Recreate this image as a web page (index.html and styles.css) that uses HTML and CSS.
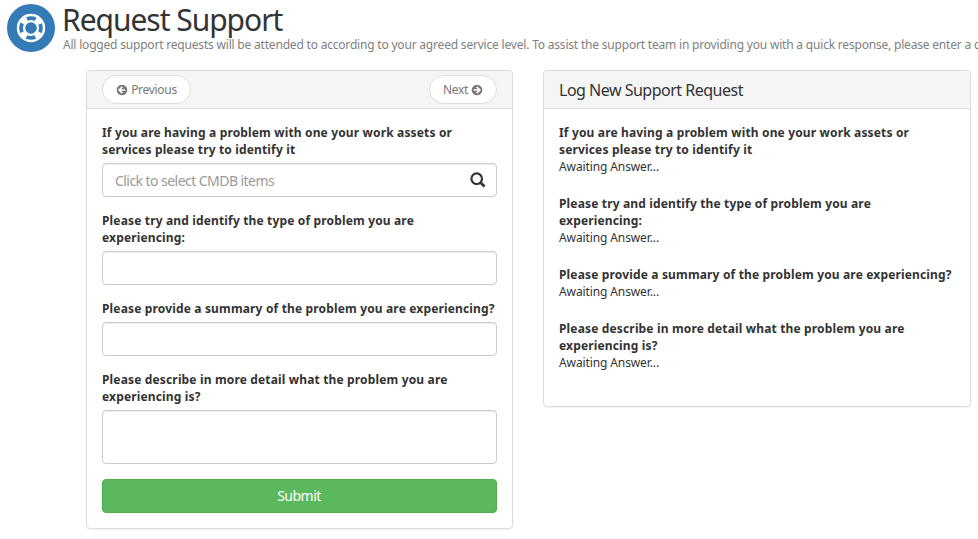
FILE: index.html
```
<!DOCTYPE html>
<html lang="en">
<head>
<meta charset="utf-8">
<title>Request Support</title>
<link rel="stylesheet" href="styles.css">
</head>
<body>
<header class="page-header">
  <svg class="logo" viewBox="0 0 48 48" aria-hidden="true">
    <circle cx="24" cy="24" r="24" fill="#337ab7"/>
    <circle cx="24" cy="24" r="10" fill="none" stroke="#fff" stroke-width="8.4"/>
    <circle cx="24" cy="24" r="9.9" fill="none" stroke="#337ab7" stroke-width="3.8" stroke-dasharray="9 6.551" stroke-dashoffset="4.5"/>
  </svg>
  <div class="heading">
    <h1>Request Support</h1>
    <p class="intro">All logged support requests will be attended to according to your agreed service level. To assist the support team in providing you with a quick response, please enter a c</p>
  </div>
</header>
<main class="columns">
  <section class="panel">
    <div class="panel-heading">
      <button class="pill previous" type="button">
        <svg class="arrow" viewBox="0 0 12 12" aria-hidden="true"><circle cx="6" cy="6" r="5.3"/><path d="M9.3 6H3.6M6.3 2.9L3.2 6l3.1 3.1"/></svg>
        <span>Previous</span>
      </button>
      <button class="pill next" type="button">
        <span>Next</span>
        <svg class="arrow" viewBox="0 0 12 12" aria-hidden="true"><circle cx="6" cy="6" r="5.3"/><path d="M2.7 6h5.7M5.7 2.9L8.8 6 5.7 9.1"/></svg>
      </button>
    </div>
    <form class="panel-body">
      <div class="group">
        <div class="label">If you are having a problem with one your work assets or<br>services please try to identify it</div>
        <div class="control lookup">
          <span>Click to select CMDB items</span>
          <svg class="search" viewBox="0 0 16 16" aria-hidden="true"><circle cx="6.7" cy="6.7" r="5.3"/><path d="M10.7 10.7l3.8 3.8"/></svg>
        </div>
      </div>
      <div class="group">
        <div class="label">Please try and identify the type of problem you are<br>experiencing:</div>
        <div class="control"></div>
      </div>
      <div class="group">
        <div class="label">Please provide a summary of the problem you are experiencing?</div>
        <div class="control"></div>
      </div>
      <div class="group">
        <div class="label">Please describe in more detail what the problem you are<br>experiencing is?</div>
        <div class="control area"></div>
      </div>
      <button class="submit" type="button">Submit</button>
    </form>
  </section>
  <section class="panel summary">
    <div class="panel-heading"><h2>Log New Support Request</h2></div>
    <div class="panel-body">
      <div class="answer"><div class="label">If you are having a problem with one your work assets or<br>services please try to identify it</div><p>Awaiting Answer...</p></div>
      <div class="answer"><div class="label">Please try and identify the type of problem you are<br>experiencing:</div><p>Awaiting Answer...</p></div>
      <div class="answer"><div class="label">Please provide a summary of the problem you are experiencing?</div><p>Awaiting Answer...</p></div>
      <div class="answer"><div class="label">Please describe in more detail what the problem you are<br>experiencing is?</div><p>Awaiting Answer...</p></div>
    </div>
  </section>
</main>
</body>
</html>
```
FILE: styles.css
```
* { box-sizing: border-box; }
body {
  margin: 0;
  width: 978px;
  height: 539px;
  overflow: hidden;
  background: #fff;
  color: #333;
  font: 12px/17px "Noto Sans", sans-serif;
}
h1, h2, p { margin: 0; font-weight: 400; }
button { font-family: inherit; }
.page-header { display: flex; height: 70px; padding: 4px 0 0 7px; }
.logo { width: 48px; height: 48px; flex: none; }
.heading { margin-left: 8px; }
h1 { margin-left: -1px; font-size: 30px; line-height: 32px; letter-spacing: -1.03px; white-space: nowrap; }
.intro { color: #808080; letter-spacing: -.195px; white-space: nowrap; }
.columns { display: flex; align-items: flex-start; gap: 30px; padding-left: 86px; }
.panel {
  flex: none;
  width: 427px;
  height: 459px;
  border: 1px solid #ddd;
  border-radius: 4px;
  box-shadow: 0 1px 1px rgba(0, 0, 0, .05);
}
.summary { width: 428px; height: 337px; }
.panel-heading {
  display: flex;
  align-items: center;
  justify-content: space-between;
  height: 38px;
  padding: 0 15px;
  background: #f5f5f5;
  border-bottom: 1px solid #ddd;
  border-radius: 3px 3px 0 0;
}
h2 { font-size: 16px; line-height: 20px; letter-spacing: -.5px; }
.pill {
  display: flex;
  align-items: center;
  justify-content: center;
  gap: 3px;
  height: 29px;
  padding: 0;
  border: 1px solid #ddd;
  border-radius: 15px;
  background: #fff;
  color: #777;
  font-size: 12px;
  letter-spacing: -.3px;
}
.previous { width: 89px; }
.next { width: 68px; }
.arrow { width: 12px; height: 12px; }
.arrow circle { fill: #777; }
.arrow path { fill: none; stroke: #fff; stroke-width: 1.7; }
.panel-body { padding: 15px; }
.answer p { letter-spacing: -.11px; }
.group { margin-bottom: 15px; }
.label { font-weight: 700; letter-spacing: .155px; white-space: nowrap; }
.control {
  height: 34px;
  margin-top: 5px;
  border: 1px solid #ccc;
  border-radius: 4px;
  background: #fff;
  box-shadow: inset 0 1px 1px rgba(0, 0, 0, .075);
}
.area { height: 54px; }
.lookup {
  display: flex;
  align-items: center;
  justify-content: space-between;
  padding: 0 10px 0 12px;
  color: #999;
  font-size: 14px;
  letter-spacing: -.55px;
}
.search { width: 16px; height: 16px; fill: none; stroke: #333; stroke-width: 2.2; }
.search path { stroke-width: 2.8; }
.submit {
  display: block;
  width: 100%;
  height: 34px;
  padding: 0 1px 2px 0;
  border: 1px solid #4cae4c;
  border-radius: 4px;
  background: #5cb85c;
  color: #fff;
  font-size: 14px;
  letter-spacing: -.5px;
}
.answer { margin-bottom: 20px; }
```
